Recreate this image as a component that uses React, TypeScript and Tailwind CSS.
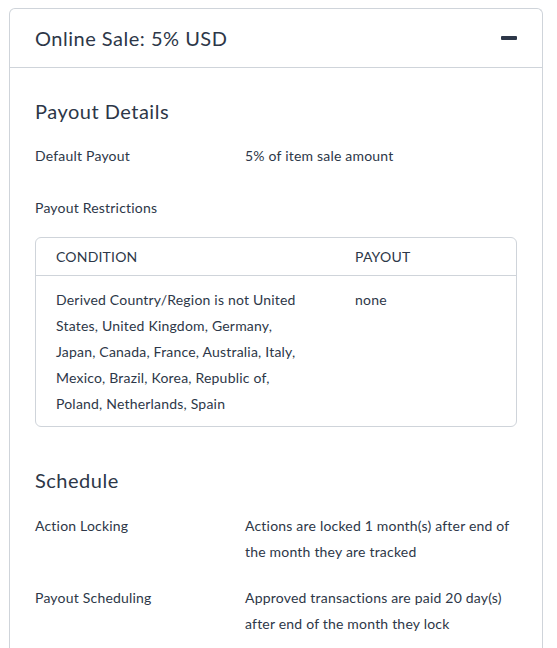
import React from 'react';

const font = { fontFamily: 'Lato, "Open Sans", sans-serif' };

function Row({ label, children }: { label: string; children: React.ReactNode }) {
  return (
    <div className="flex text-[14px] leading-[26px] tracking-[0.2px]">
      <div className="w-[210px] shrink-0">{label}</div>
      <div className="flex-1">{children}</div>
    </div>
  );
}

export default function App() {
  return (
    <div className="min-h-screen bg-white pl-[9px] pr-[14px] pt-[8px] text-[#2d3748]" style={font}>
      <div className="rounded-t-[6px] border border-b-0 border-[#cfd4da] pb-10">
        <div className="flex h-[59px] items-center justify-between border-b border-[#cfd4da] pl-[25px] pr-[25px]">
          <h2 className="text-[20px] tracking-[0.5px]">Online Sale: 5% USD</h2>
          <span className="block h-[4px] w-[16px] rounded-[1px] bg-[#2d3748]" />
        </div>

        <div className="px-[25px] pt-[29px]">
          <h3 className="text-[20px] leading-[28px] tracking-[0.5px]">Payout Details</h3>
          <div className="mt-[18px]">
            <Row label="Default Payout">5% of item sale amount</Row>
          </div>
          <div className="mt-[26px] text-[14px] leading-[26px] tracking-[0.2px]">Payout Restrictions</div>

          <div className="mt-[16px] w-[482px] rounded-[6px] border border-[#cfd4da] text-[14px] tracking-[0.2px]">
            <div className="flex h-[38px] items-center border-b border-[#cfd4da]">
              <div className="w-[299px] pl-[20px]">CONDITION</div>
              <div className="pl-[20px]">PAYOUT</div>
            </div>
            <div className="flex pb-[9px] pt-[11px] leading-[26px]">
              <div className="w-[299px] pl-[20px] pr-[20px]">
                Derived Country/Region is not United States, United Kingdom, Germany, Japan, Canada,
                France, Australia, Italy, Mexico, Brazil, Korea, Republic of, Poland, Netherlands, Spain
              </div>
              <div className="pl-[20px]">none</div>
            </div>
          </div>

          <h3 className="mt-[39px] text-[20px] leading-[28px] tracking-[0.5px]">Schedule</h3>
          <div className="mt-[19px] flex flex-col gap-[20px]">
            <Row label="Action Locking">
              Actions are locked 1 month(s) after end of the month they are tracked
            </Row>
            <Row label="Payout Scheduling">
              Approved transactions are paid 20 day(s) after end of the month they lock
            </Row>
          </div>
        </div>
      </div>
    </div>
  );
}
